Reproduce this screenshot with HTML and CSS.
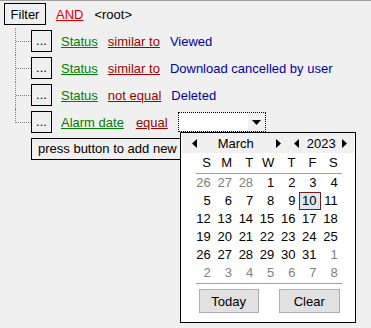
FILE: index.html
```html
<!DOCTYPE html>
<html lang="en">
<head>
    <meta charset="UTF-8">
    <meta name="viewport" content="width=device-width, initial-scale=1.0">
    <title>Filter</title>
    <link rel="stylesheet" href="styles.css">
</head>
<body>
    <div class="filter-tree">
        <!-- Root -->
        <div class="root-row">
            <button class="filter-btn">Filter</button>
            <span class="op">AND</span>
            <span class="root-label">&lt;root&gt;</span>
        </div>

        <!-- Conditions -->
        <ul class="conditions">
            <li class="cond">
                <button class="more-btn">...</button>
                <span class="field">Status</span>
                <span class="cmp">similar to</span>
                <span class="val">Viewed</span>
            </li>
            <li class="cond">
                <button class="more-btn">...</button>
                <span class="field">Status</span>
                <span class="cmp">similar to</span>
                <span class="val">Download cancelled by user</span>
            </li>
            <li class="cond">
                <button class="more-btn">...</button>
                <span class="field">Status</span>
                <span class="cmp">not equal</span>
                <span class="val">Deleted</span>
            </li>
            <li class="cond">
                <button class="more-btn">...</button>
                <span class="field field-date">Alarm date</span>
                <span class="cmp">equal</span>
                <div class="date-select">
                    <span class="date-field"></span>
                    <span class="date-arrow">
                        <svg width="9" height="5" viewBox="0 0 9 5"><polygon points="0,0 9,0 4.5,5" fill="#000"/></svg>
                    </span>

                    <!-- Calendar popup -->
                    <div class="calendar">
                        <div class="cal-head">
                            <svg class="arr arr-1" width="5" height="9" viewBox="0 0 5 9"><polygon points="5,0 5,9 0,4.5" fill="#000"/></svg>
                            <span class="cal-month">March</span>
                            <svg class="arr arr-2" width="5" height="9" viewBox="0 0 5 9"><polygon points="0,0 0,9 5,4.5" fill="#000"/></svg>
                            <svg class="arr arr-3" width="5" height="9" viewBox="0 0 5 9"><polygon points="5,0 5,9 0,4.5" fill="#000"/></svg>
                            <span class="cal-year">2023</span>
                            <svg class="arr arr-4" width="5" height="9" viewBox="0 0 5 9"><polygon points="0,0 0,9 5,4.5" fill="#000"/></svg>
                        </div>
                        <div class="cal-grid cal-names">
                            <span>S</span><span>M</span><span>T</span><span>W</span><span>T</span><span>F</span><span>S</span>
                        </div>
                        <div class="cal-sep"></div>
                        <div class="cal-grid cal-days">
                            <span class="other">26</span><span class="other">27</span><span class="other">28</span><span>1</span><span>2</span><span>3</span><span>4</span>
                            <span>5</span><span>6</span><span>7</span><span>8</span><span>9</span><span class="selected">10</span><span>11</span>
                            <span>12</span><span>13</span><span>14</span><span>15</span><span>16</span><span>17</span><span>18</span>
                            <span>19</span><span>20</span><span>21</span><span>22</span><span>23</span><span>24</span><span>25</span>
                            <span>26</span><span>27</span><span>28</span><span>29</span><span>30</span><span>31</span><span class="other">1</span>
                            <span class="other">2</span><span class="other">3</span><span class="other">4</span><span class="other">5</span><span class="other">6</span><span class="other">7</span><span class="other">8</span>
                        </div>
                        <div class="cal-sep cal-sep-bottom"></div>
                        <div class="cal-buttons">
                            <button class="cal-btn today-btn">Today</button>
                            <button class="cal-btn clear-btn">Clear</button>
                        </div>
                    </div>
                </div>
            </li>
        </ul>

        <div class="add-new">press button to add new</div>
    </div>
</body>
</html>
```

FILE: styles.css
```css
body {
    font-family: "Liberation Sans", Arial, sans-serif;
    font-size: 13px;
    background-color: #f0f0f0;
    margin: 0;
    border-top: 1px solid #a0a0a0;
    height: 327px;
    overflow: hidden;
    color: #000;
}

button {
    font-family: inherit;
    font-size: 13px;
    color: #000;
    padding: 0;
    margin: 0;
}

.root-row {
    display: flex;
    align-items: center;
    height: 22px;
    margin: 2px 0 3px 4px;
}

.filter-btn {
    width: 42px;
    height: 22px;
    border: 1px solid #000;
    background: #f0f0f0;
    margin-right: 10px;
}

.op {
    color: #e00000;
    text-decoration: underline;
    margin-right: 11px;
}

.conditions {
    list-style: none;
    margin: 0 0 0 15px;
    padding: 0;
}

.cond {
    position: relative;
    display: flex;
    align-items: center;
    height: 26px;
    padding: 0 0 1px 16px;
    white-space: nowrap;
}

/* tree connectors */
.cond::before {
    content: "";
    position: absolute;
    left: 0;
    top: 0;
    height: 27px;
    border-left: 1px dotted #808080;
}

.cond:last-child::before {
    height: 14px;
}

.cond::after {
    content: "";
    position: absolute;
    left: 1px;
    top: 13px;
    width: 15px;
    border-top: 1px dotted #808080;
}

.more-btn {
    width: 21px;
    height: 22px;
    border: 1px solid #000;
    background: #f0f0f0;
    line-height: 18px;
    margin-right: 9px;
}

.field {
    color: #008000;
    text-decoration: underline;
    margin-right: 10px;
}

.field-date {
    margin-right: 12px;
}

.cmp {
    color: #a00000;
    text-decoration: underline;
    margin-right: 10px;
}

.val {
    color: #0000a8;
}

.date-select {
    position: relative;
    display: flex;
    width: 88px;
    height: 20px;
    margin-left: 0;
    border: 1px dotted #000;
    box-sizing: border-box;
}

.date-field {
    width: 69px;
    background: #fff;
}

.date-arrow {
    flex: 1;
    display: flex;
    align-items: center;
    justify-content: center;
    padding-left: 1px;
}

.calendar {
    position: absolute;
    top: 19px;
    left: 1px;
    width: 176px;
    box-sizing: border-box;
    background: #fff;
    border: 1px solid #000;
    padding-bottom: 9px;
    z-index: 2;
}

.cal-head {
    display: flex;
    align-items: center;
    height: 20px;
    margin: 0 1px;
    background: #f0f0f0;
}

.arr-1 { margin-left: 10px; }
.cal-month { margin-left: 21px; }
.arr-2 { margin-left: 22px; }
.arr-3 { margin-left: 13px; }
.cal-year { margin-left: 8px; }
.arr-4 { margin-left: 6px; }

.cal-grid {
    display: grid;
    grid-template-columns: repeat(7, 1fr);
    width: 148px;
    margin-left: 13px;
    text-align: right;
}

.cal-grid span {
    padding-right: 4px;
}

.cal-names span {
    line-height: 20px;
}

.cal-days span {
    line-height: 18px;
    height: 18px;
}

.cal-days .other {
    color: #808080;
}

.cal-days .selected {
    border: 1px solid #7a1c1c;
    background: #dde7f2;
    padding-right: 3px;
    line-height: 16px;
    height: 16px;
}

.cal-sep {
    height: 1px;
    width: 146px;
    margin-left: 15px;
    background: #a0a0a0;
}

.cal-sep-bottom {
    margin-top: 1px;
}

.cal-buttons {
    display: flex;
    margin: 5px 0 0 18px;
}

.cal-btn {
    height: 24px;
    background: #e1e1e1;
    border: 1px solid #adadad;
}

.today-btn {
    width: 60px;
    margin-right: 20px;
}

.clear-btn {
    width: 61px;
}

.add-new {
    margin: 2px 0 0 31px;
    width: 170px;
    height: 22px;
    box-sizing: border-box;
    border: 1px solid #000;
    padding-left: 6px;
    line-height: 20px;
}
```
